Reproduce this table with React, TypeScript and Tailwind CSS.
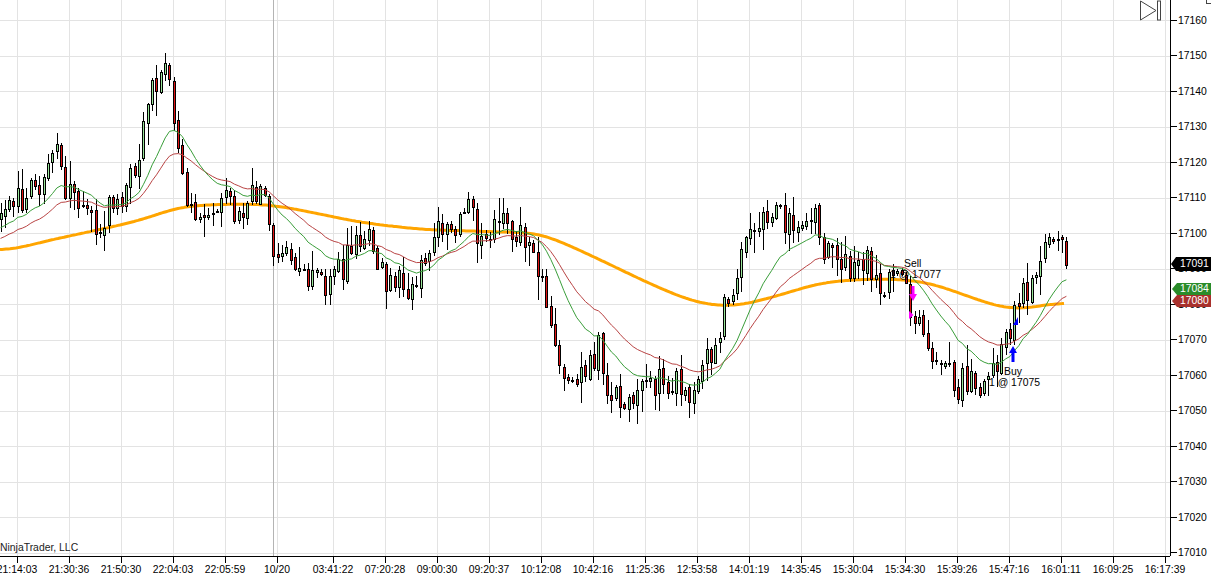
import React from 'react';

const PLOT_W = 1170;
const PLOT_H = 556;
const yOf = (p: number) => 20 + (17160 - p) * 3.55;

// rough shape of the session, x pixel -> price
const PRICE_PATH: [number, number][] = [
  [0, 17105], [10, 17108], [20, 17110], [35, 17113], [50, 17120], [57, 17124], [65, 17114],
  [80, 17110], [95, 17104], [110, 17106], [120, 17108], [130, 17115], [140, 17125], [150, 17138],
  [160, 17146], [168, 17143], [175, 17130], [185, 17115], [195, 17100], [205, 17106], [215, 17110],
  [225, 17108], [235, 17106], [245, 17109], [255, 17113], [265, 17108], [275, 17095], [285, 17092],
  [300, 17090], [315, 17088], [330, 17086], [345, 17092], [360, 17097], [370, 17098], [385, 17088],
  [400, 17086], [410, 17084], [425, 17095], [440, 17102], [455, 17100], [468, 17106], [480, 17098],
  [495, 17103], [510, 17101], [525, 17100], [535, 17096], [545, 17080], [555, 17068], [565, 17063],
  [580, 17060], [590, 17064], [600, 17068], [610, 17055], [620, 17050], [635, 17053], [650, 17058],
  [665, 17058], [680, 17057], [690, 17052], [700, 17062], [710, 17064], [720, 17075], [730, 17085],
  [745, 17094], [755, 17100], [765, 17104], [775, 17106], [790, 17103], [800, 17105], [815, 17103],
  [825, 17096], [835, 17093], [845, 17090], [860, 17093], [870, 17091], [880, 17084], [890, 17085],
  [900, 17089], [910, 17080], [920, 17072], [930, 17066], [945, 17060], [955, 17057], [965, 17058],
  [975, 17056], [985, 17055], [995, 17062], [1005, 17068], [1015, 17076], [1025, 17083], [1035, 17090],
  [1045, 17094], [1055, 17097], [1068, 17092],
];

// slow average, keyed by hand
const ORANGE_PATH: [number, number][] = [
  [0, 17094.5], [50, 17098], [100, 17101], [140, 17103.5], [180, 17107.5], [230, 17108.2],
  [270, 17108], [300, 17106.5], [360, 17103], [420, 17101], [500, 17100.3], [540, 17100],
  [565, 17097], [600, 17092.5], [640, 17087], [680, 17082], [710, 17079.5], [740, 17079.5],
  [780, 17082.5], [820, 17086], [860, 17087], [900, 17087], [930, 17086], [960, 17083],
  [1000, 17079], [1020, 17078.5], [1040, 17079.3], [1064, 17081],
];

const TICKS: [number, string][] = [
  [17, '21:14:03'], [69, '21:30:36'], [121, '21:50:30'], [173, '22:04:03'], [225, '22:05:59'],
  [277, '10/20'], [333, '03:41:22'], [385, '07:20:28'], [437, '09:00:30'], [489, '09:20:37'],
  [541, '10:12:08'], [593, '10:42:16'], [645, '11:25:36'], [697, '12:53:58'], [749, '14:01:19'],
  [801, '14:35:45'], [853, '15:30:04'], [905, '15:34:30'], [957, '15:39:26'], [1009, '15:47:16'],
  [1061, '16:01:11'], [1113, '16:09:25'], [1165, '16:17:39'],
];

const PRICES = Array.from({ length: 16 }, (_, i) => 17160 - i * 10);

function interp(path: [number, number][], x: number) {
  if (x <= path[0][0]) return path[0][1];
  for (let i = 1; i < path.length; i++) {
    const [x1, y1] = path[i];
    const [x0, y0] = path[i - 1];
    if (x <= x1) return y0 + ((y1 - y0) * (x - x0)) / (x1 - x0);
  }
  return path[path.length - 1][1];
}

function rng(seed: number) {
  let a = seed;
  return () => {
    a |= 0;
    a = (a + 0x6d2b79f5) | 0;
    let t = Math.imul(a ^ (a >>> 15), 1 | a);
    t = (t + Math.imul(t ^ (t >>> 7), 61 | t)) ^ t;
    return ((t ^ (t >>> 14)) >>> 0) / 4294967296;
  };
}

type Bar = { x: number; o: number; h: number; l: number; c: number };

const q = (v: number) => Math.round(v * 4) / 4;

function buildBars(): Bar[] {
  const r = rng(11);
  const N = 247;
  const bars: Bar[] = [];
  let prev = 17104;
  for (let i = 0; i < N; i++) {
    const x = 0.5 + i * 4.333;
    const t = interp(PRICE_PATH, x);
    const o = q(prev + (r() - 0.5) * 1.5);
    let c = q(t + (r() - 0.5) * 9);
    if (i === N - 1) c = 17091;
    const h = q(Math.max(o, c) + r() * r() * 7 + 0.5);
    const l = q(Math.min(o, c) - r() * r() * 7 - 0.5);
    bars.push({ x, o, h, l, c });
    prev = c;
  }
  return bars;
}

function ema(bars: Bar[], period: number, start: number) {
  const a = 2 / (period + 1);
  let e = start;
  return bars.map((b) => {
    e += a * (b.c - e);
    return [b.x, e] as [number, number];
  });
}

function smoothPath(path: [number, number][], x0: number, x1: number) {
  let pts: number[] = [];
  for (let x = x0; x <= x1; x += 2) pts.push(interp(path, x));
  for (let pass = 0; pass < 2; pass++) {
    pts = pts.map((_, i) => {
      let s = 0;
      let n = 0;
      for (let k = -8; k <= 8; k++) {
        const j = i + k;
        if (j >= 0 && j < pts.length) {
          s += pts[j];
          n++;
        }
      }
      return s / n;
    });
  }
  return pts.map((p, i) => [x0 + i * 2, p] as [number, number]);
}

const toPoints = (pts: [number, number][]) =>
  pts.map(([x, p]) => `${x.toFixed(1)},${yOf(p).toFixed(1)}`).join(' ');

function Candle({ b }: { b: Bar }) {
  const px = Math.round(b.x);
  const up = b.c >= b.o;
  const top = Math.round(yOf(Math.max(b.o, b.c)));
  const bot = Math.round(yOf(Math.min(b.o, b.c)));
  const hi = Math.round(yOf(b.h));
  const lo = Math.round(yOf(b.l));
  const bh = Math.max(1, bot - top);
  return (
    <g>
      <rect x={px} y={hi} width={1} height={lo - hi} fill="#000" />
      <rect x={px - 1} y={top} width={3} height={bh + 1} fill="#000" />
      {bh > 1 && (
        <rect x={px} y={top + 1} width={1} height={bh - 1} fill={up ? '#9ae59a' : '#e01414'} />
      )}
    </g>
  );
}

function Plot() {
  const bars = buildBars();
  const green = ema(bars, 17, 17101);
  const red = ema(bars, 30, 17098);
  const orange = smoothPath(ORANGE_PATH, 0, 1064);

  return (
    <svg width={PLOT_W} height={PLOT_H} className="block">
      <g shapeRendering="crispEdges">
        {PRICES.map((p) => (
          <rect key={p} x={0} y={Math.round(yOf(p))} width={PLOT_W} height={1} fill="#e3e3e3" />
        ))}
        {TICKS.map(([x]) => (
          <rect key={x} x={x} y={0} width={1} height={PLOT_H} fill="#e3e3e3" />
        ))}
        <rect x={273} y={0} width={1} height={PLOT_H} fill="#b4b4b4" />
      </g>

      <polyline points={toPoints(orange)} fill="none" stroke="#ffa500" strokeWidth={3} strokeLinejoin="round" />

      <g shapeRendering="crispEdges">
        {bars.map((b, i) => (
          <Candle key={i} b={b} />
        ))}
      </g>

      <polyline points={toPoints(red)} fill="none" stroke="#b94444" strokeWidth={1} />
      <polyline points={toPoints(green)} fill="none" stroke="#3a9e3a" strokeWidth={1} />

      {/* sell entry / exit */}
      <polygon points="911.5,286 914.5,286 914.5,294 917,294 913,301 909,294 911.5,294" fill="#ff00ff" />
      <polygon points="909,311 913.5,315 909,319" fill="#ff00ff" />
      {/* buy entry / exit */}
      <polygon points="1013,346 1017,353 1014.5,353 1014.5,362 1011.5,362 1011.5,353 1009,353" fill="#0000ff" />
      <polygon points="1013,325 1018,317 1018,325" fill="#0000ff" />

      {/* scroll-to-end control */}
      <polygon points="1140.5,1 1156,10.5 1140.5,20" fill="none" stroke="#444" strokeWidth={1} />
      <rect x={1157.5} y={1} width={3} height={19} fill="none" stroke="#444" strokeWidth={1} />
    </svg>
  );
}

function Note({ x, y, children }: { x: number; y: number; children: React.ReactNode }) {
  return (
    <div className="absolute whitespace-nowrap leading-[12px] text-black" style={{ left: x, top: y }}>
      {children}
    </div>
  );
}

const FLAG = '[clip-path:polygon(0_50%,5px_0,100%_0,100%_100%,5px_100%)]';

function PriceAxis() {
  return (
    <div className="relative w-[41px] h-full border-l border-black">
      <div className="flex flex-col pt-[2.25px]">
        {PRICES.map((p) => (
          <div key={p} className="flex h-[35.5px] items-center gap-px">
            <div className="w-[6px] h-px bg-black" />
            <span className="leading-[13px] text-black">{p}</span>
          </div>
        ))}
      </div>
      <div className="absolute right-0 top-0 w-[5px] h-[4px] border-b border-l border-[#444]" />
      <div className={`absolute left-0 top-[257px] w-[40px] h-[14px] bg-black text-white leading-[14px] pl-[9px] ${FLAG}`}>
        17091
      </div>
      <div className="absolute left-px top-[283px] w-[40px] h-[12px] bg-[#2a8c2a] text-white leading-[12px] pl-[8px] [clip-path:polygon(0_50%,5px_0,100%_0,100%_100%,5px_100%)]">
        17084
      </div>
      <div className="absolute left-px top-[295px] w-[40px] h-[12px] bg-[#a8302c] text-white leading-[12px] pl-[8px] [clip-path:polygon(0_50%,5px_0,100%_0,100%_100%,5px_100%)]">
        17080
      </div>
    </div>
  );
}

function TimeAxis() {
  return (
    <div className="flex h-[22px]">
      <div className="w-[1170px] shrink-0 h-full border-t border-black">
        <div className="flex -ml-[9px]">
          {TICKS.map(([x, label]) => (
            <div key={x} className={`flex w-[52px] shrink-0 flex-col items-center ${label === '10/20' ? 'mr-[4px]' : ''}`}>
              <div className="w-px h-[6px] bg-black" />
              <span className="whitespace-nowrap leading-[13px] text-black">{label}</span>
            </div>
          ))}
        </div>
      </div>
    </div>
  );
}

export default function App() {
  return (
    <div className="w-[1211px] h-[578px] overflow-hidden bg-white flex flex-col font-['Liberation_Sans',Arial,sans-serif] text-[10.4px]">
      <div className="flex h-[556px] shrink-0">
        <div className="relative w-[1170px] h-full overflow-hidden">
          <Plot />
          <Note x={904} y={258}>Sell</Note>
          <Note x={890} y={269}>1 @ 17077</Note>
          <Note x={1004} y={366}>Buy</Note>
          <Note x={989} y={377}>1 @ 17075</Note>
          <div className="absolute left-0 top-[542px] leading-[12px] text-[#222]">NinjaTrader, LLC</div>
        </div>
        <PriceAxis />
      </div>
      <TimeAxis />
    </div>
  );
}
